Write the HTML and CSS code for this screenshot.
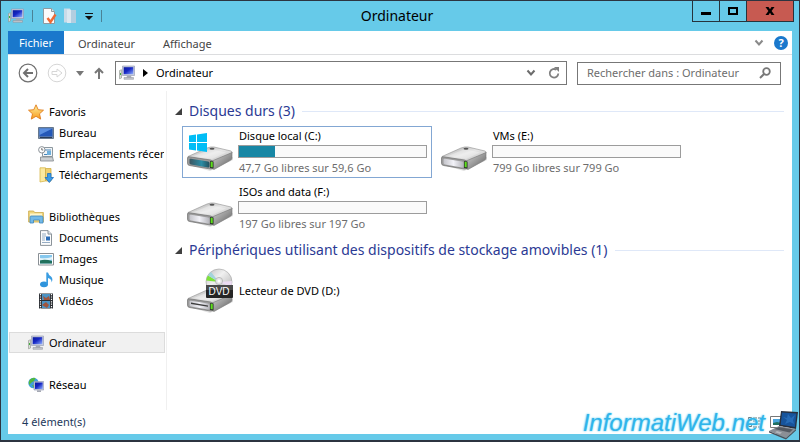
FILE: index.html
```html
<!DOCTYPE html>
<html lang="fr">
<head>
  <meta charset="UTF-8">
  <meta name="viewport" content="width=device-width, initial-scale=1.0">
  <title>Ordinateur</title>
  <link rel="stylesheet" href="styles.css">
</head>
<body>
  <!-- Icônes réutilisées -->
  <svg class="defs" aria-hidden="true">
    <defs>
      <linearGradient id="screen" x1="0" y1="0" x2="1" y2="1">
        <stop offset="0" stop-color="#0a1a9a"/>
        <stop offset="0.45" stop-color="#1626c4"/>
        <stop offset="1" stop-color="#8fb0ff"/>
      </linearGradient>
      <linearGradient id="metalTop" x1="0" y1="0" x2="1" y2="1">
        <stop offset="0" stop-color="#a9a9a9"/>
        <stop offset="0.5" stop-color="#e6e6e6"/>
        <stop offset="1" stop-color="#bdbdbd"/>
      </linearGradient>
      <linearGradient id="metalSide" x1="0" y1="0" x2="1" y2="1">
        <stop offset="0" stop-color="#d8d8d8"/>
        <stop offset="1" stop-color="#5c5c5c"/>
      </linearGradient>
      <linearGradient id="front" x1="0" y1="0" x2="1" y2="0">
        <stop offset="0" stop-color="#c4c4ca"/>
        <stop offset="0.5" stop-color="#f2f2f8"/>
        <stop offset="1" stop-color="#b4b4ba"/>
      </linearGradient>
      <linearGradient id="frontSystem" x1="0" y1="0" x2="1" y2="0">
        <stop offset="0" stop-color="#3b5560"/>
        <stop offset="0.6" stop-color="#2b8ca4"/>
        <stop offset="1" stop-color="#24505e"/>
      </linearGradient>
      <linearGradient id="disc" x1="0" y1="0" x2="1" y2="1">
        <stop offset="0" stop-color="#bcbcbc"/>
        <stop offset="0.4" stop-color="#f0f0f0"/>
        <stop offset="1" stop-color="#a8a8a8"/>
      </linearGradient>
      <linearGradient id="gold" x1="0" y1="0" x2="0" y2="1">
        <stop offset="0" stop-color="#fff2a0"/>
        <stop offset="1" stop-color="#f79a1c"/>
      </linearGradient>
      <symbol id="pc" viewBox="0 0 16 16">
        <path d="M.5 5.500l2-.8V13l-2 .8z" fill="#d9dcd6" stroke="#8c928c" stroke-width=".6"/>
        <path d="M1 8h1v2H1z" fill="#3fae3a"/>
        <path d="M3.500 1h12v9.500h-12z" fill="#c9cede" stroke="#8e96ae" stroke-width=".6"/>
        <path d="M4.700 2.200h9.600v7H4.700z" fill="url(#screen)"/>
        <path d="M8 10.700h4l.6 2H7.400z" fill="#a5a9b4"/>
        <path d="M5 12.500h9.500v1.800H5z" fill="#c3c6cd" stroke="#8a8e98" stroke-width=".5"/>
      </symbol>
      <symbol id="drive" viewBox="0 0 48 26">
        <path d="M3 16l20 7 24-12v3L24 25 3 19z" fill="#000" opacity=".12"/>
        <path d="M2 10.500L21 2Q25 .5 28 1l17 4q2 1 1 2.200L27 15.500 3 12z" fill="url(#metalTop)" stroke="#8f8f8f" stroke-width=".6"/>
        <path d="M8 10L25 3l15 3.500L26 13z" fill="#fff" opacity=".3"/>
        <path d="M26 15L46 6.500V12q0 1.500-2 2.500L28 23.500l-2-1z" fill="url(#metalSide)" stroke="#777" stroke-width=".6"/>
        <path d="M1.500 12q0-1.500 2-1.200l21 3.200q2.500.5 2.500 2.500v4.500q0 2.500-2.500 2L3.500 19.500q-2-.5-2-2z" fill="#9a9a9a" stroke="#707070" stroke-width=".7"/>
        <ellipse cx="26" cy="2.800" rx="2.500" ry="1" fill="#555"/>
      </symbol>
      <symbol id="led" viewBox="0 0 48 26">
        <path d="M24 15l3.500 .5v7l-3.500-.6z" fill="#2f3b2b"/>
        <path d="M24.700 15.800l2 .3v5.200l-2-.3z" fill="#5ee01c"/>
      </symbol>
    </defs>
  </svg>

  <div class="window">
    <header class="titlebar">
      <div class="quick">
        <svg class="icon16" aria-hidden="true"><use href="#pc"/></svg>
        <span class="sep"></span>
        <button class="quick-btn" type="button" aria-label="Propriétés">
          <svg viewBox="0 0 16 16" width="16" height="16">
            <path d="M2.500 .5h8l3 3v12h-11z" fill="#fbfbfb" stroke="#8e9aa0"/>
            <path d="M10.500 .5v3h3" fill="#dfe5e8" stroke="#8e9aa0"/>
            <path d="M6.500 10l3 4 5-7.500" fill="none" stroke="#ef6a34" stroke-width="2.400"/>
          </svg>
        </button>
        <button class="quick-btn" type="button" aria-label="Nouveau dossier">
          <svg viewBox="0 0 16 16" width="16" height="16">
            <path d="M1 .5h6v14H1z" fill="#c9dbe8"/>
            <path d="M6 2h7v13H4z" fill="#b3cee0"/>
            <path d="M4 1.500h4V15H4z" fill="#dbe8f1"/>
          </svg>
        </button>
        <button class="quick-btn" type="button" aria-label="Personnaliser la barre d'outils">
          <svg viewBox="0 0 8 8" width="8" height="8"><path d="M0 1h8v1H0zM0 4h8L4 8z" fill="#111"/></svg>
        </button>
        <span class="sep"></span>
      </div>
      <h1 class="title">Ordinateur</h1>
      <div class="controls">
        <button type="button" aria-label="Réduire"><svg viewBox="0 0 10 10" width="10" height="10"><path d="M0 6h10v3H0z"/></svg></button>
        <button type="button" aria-label="Agrandir"><svg viewBox="0 0 10 10" width="10" height="10"><path d="M0 1h10v8H0zM2 3v4h6V3z" fill-rule="evenodd"/></svg></button>
        <button class="close" type="button" aria-label="Fermer"><svg viewBox="0 0 10 10" width="10" height="10"><path d="M.5 1h3L5 3.300 6.500 1h3L6.600 5l2.900 4h-3L5 6.700 3.500 9h-3l2.900-4z"/></svg></button>
      </div>
    </header>

    <div class="client">
      <nav class="ribbon" aria-label="Ruban">
        <button class="tab tab-file" type="button">Fichier</button>
        <button class="tab" type="button">Ordinateur</button>
        <button class="tab" type="button">Affichage</button>
        <div class="ribbon-end">
          <button class="flat" type="button" aria-label="Développer le ruban">
            <svg viewBox="0 0 10 8" width="10" height="8"><path d="M1.500 1.500L5 5.500l3.500-4" fill="none" stroke="#8a8a8a" stroke-width="2"/></svg>
          </button>
          <button class="help" type="button" aria-label="Aide">?</button>
        </div>
      </nav>

      <div class="toolbar">
        <div class="history">
          <button class="flat" type="button" aria-label="Précédent">
            <svg viewBox="0 0 20 20" width="20" height="20" fill="none" stroke="#707070">
              <circle cx="10" cy="10" r="8.800" stroke-width="1.200"/>
              <path d="M15 10H6.500M10 6l-4 4 4 4" stroke-width="2"/>
            </svg>
          </button>
          <button class="flat" type="button" aria-label="Suivant" disabled>
            <svg viewBox="0 0 20 20" width="20" height="20" fill="none" stroke="#d6d6d6">
              <circle cx="10" cy="10" r="8.800"/>
              <path d="M5 8.500h5V6l5 4-5 4v-2.500H5z"/>
            </svg>
          </button>
          <button class="flat" type="button" aria-label="Emplacements précédents">
            <svg viewBox="0 0 8 5" width="8" height="5"><path d="M0 0h8L4 5z" fill="#777"/></svg>
          </button>
          <button class="flat" type="button" aria-label="Dossier parent">
            <svg viewBox="0 0 12 12" width="12" height="12"><path d="M6 12V2M2 6l4-4 4 4" fill="none" stroke="#777" stroke-width="2"/></svg>
          </button>
        </div>
        <div class="address">
          <svg class="icon16" aria-hidden="true"><use href="#pc"/></svg>
          <svg viewBox="0 0 5 8" width="5" height="8" aria-hidden="true"><path d="M0 0l5 4-5 4z"/></svg>
          <a class="crumb" href="#">Ordinateur</a>
          <button class="flat" type="button" aria-label="Adresses récentes">
            <svg viewBox="0 0 10 8" width="10" height="8"><path d="M1.500 1.500L5 5.500l3.500-4" fill="none" stroke="#6c6c6c" stroke-width="2"/></svg>
          </button>
          <button class="flat" type="button" aria-label="Actualiser">
            <svg viewBox="0 0 12 12" width="12" height="12"><path d="M8.500 2.800A4.300 4.300 0 1 0 10.300 6.500" fill="none" stroke="#808080" stroke-width="1.800"/><path d="M6 0h5v5z" fill="#808080"/></svg>
          </button>
        </div>
        <div class="search">
          <input type="text" aria-label="Rechercher" placeholder="Rechercher dans : Ordinateur">
          <svg viewBox="0 0 12 12" width="12" height="12" aria-hidden="true"><circle cx="7.500" cy="4.500" r="3.300" fill="none" stroke="#777" stroke-width="1.800"/><path d="M5 7l-4 4" stroke="#777" stroke-width="2"/></svg>
        </div>
      </div>

      <div class="body">
        <nav class="sidebar" aria-label="Volet de navigation">
          <ul>
            <li><a href="#">
              <svg class="icon16" viewBox="0 0 16 16"><path d="M8 .8l2.200 4.900 5.300.5-4 3.600 1.200 5.300L8 12.300l-4.700 2.800 1.200-5.300-4-3.600 5.300-.5z" fill="url(#gold)" stroke="#e07c1c" stroke-width=".9"/></svg>
              Favoris</a></li>
            <li class="child"><a href="#">
              <svg class="icon16" viewBox="0 0 16 16"><path d="M.5 2.500h15v11H.5z" fill="#7d8fa8" stroke="#66788e"/><path d="M1.500 3.500h13v8h-13z" fill="#2458b8"/><path d="M1.500 3.500h13L1.500 10z" fill="#5b8fe0"/><path d="M2 12h12v1H2z" fill="#2a3c58"/></svg>
              Bureau</a></li>
            <li class="child"><a href="#">
              <svg class="icon16" viewBox="0 0 16 16"><path d="M4.500 1.500h10v9h-10z" fill="#f2f5f7" stroke="#8d989f"/><path d="M6 4h7M6 8.500h3" stroke="#4a86b8"/><path d="M9 5h4v4H9z" fill="#6fb0dc"/><path d="M2.500 11h12l1 4h-13z" fill="#ccd0d3" stroke="#83898d" stroke-width=".8"/><circle cx="3.800" cy="3.800" r="3.200" fill="#fff" stroke="#8b9298"/><path d="M3.800 2v2h1.500" fill="none" stroke="#555" stroke-width=".8"/></svg>
              Emplacements récents</a></li>
            <li class="child"><a href="#">
              <svg class="icon16" viewBox="0 0 16 16"><path d="M2 .8h5.500V14L2 15z" fill="#fbe9a0" stroke="#d8b84c" stroke-width=".8"/><path d="M7.500 1.500H13V14H7.500z" fill="#f0d070" stroke="#cfae46" stroke-width=".8"/><path d="M9.500 6.500h3.500v4h2.500l-4.200 5-4.300-5h2.500z" fill="#3c9be6" stroke="#1d6fc0" stroke-width=".8"/></svg>
              Téléchargements</a></li>
          </ul>
          <ul>
            <li><a href="#">
              <svg class="icon16" viewBox="0 0 16 16"><path d="M.6 2h5l1 1.500h8.800V13H.6z" fill="#f0d67c" stroke="#cba94c" stroke-width=".8"/><path d="M2 4.500h12v3H2z" fill="#fff5c8"/><path d="M3 7h10.500q1.500 0 1.500 1.500V14h-3.500v-3h-6v3H2V8.500Q2 7 3 7z" fill="#72b9e8" stroke="#3d86bd" stroke-width=".8"/></svg>
              Bibliothèques</a></li>
            <li class="child"><a href="#">
              <svg class="icon16" viewBox="0 0 16 16"><path d="M2.500 .6H10l3.500 3.500v11.300h-11z" fill="#fcfcfc" stroke="#7e878e" stroke-width=".9"/><path d="M10 .6v3.500h3.500" fill="#dde3e8" stroke="#7e878e" stroke-width=".9"/><path d="M4 4h4M4 6h4M4 8h3M4 10h3M4 12.500h8" stroke="#8ba4bd" stroke-width=".9"/><path d="M8 6.500h4v4H8z" fill="#2d6eb8"/></svg>
              Documents</a></li>
            <li class="child"><a href="#">
              <svg class="icon16" viewBox="0 0 16 16"><path d="M.5 2.500h15v11.500H.5z" fill="#fff" stroke="#8a9095"/><path d="M2 4h12v8.500H2z" fill="#86c8ee"/><path d="M2 7q6 1 12-1v2.500q-6 2-12 1z" fill="#e4f4fa"/><path d="M2 9.500q5-1.500 12 .5v2.500H2z" fill="#20705c"/></svg>
              Images</a></li>
            <li class="child"><a href="#">
              <svg class="icon16" viewBox="0 0 16 16"><ellipse cx="6" cy="12.300" rx="4" ry="2.900" fill="#2f94dc"/><path d="M8.300 .5H10q.5 2.500 3 4 2.500 2.500.5 6 .5-3.500-3.500-4.500v6.300H8.300z" fill="#3b9de2"/></svg>
              Musique</a></li>
            <li class="child"><a href="#">
              <svg class="icon16" viewBox="0 0 16 16"><path d="M1 .5h14v15H1z" fill="#2b2e33"/><path d="M4 1h8v6H4zM4 8h8v7H4z" fill="#4b93c4"/><path d="M5 3l3 2 3-2 1 4H6zM4 12l4-3 3 3-2 3z" fill="#a0553c"/><path d="M2.500 1v15M13.500 1v15" stroke="#fff" stroke-width="1.200" stroke-dasharray="1.200 1.200"/></svg>
              Vidéos</a></li>
          </ul>
          <ul>
            <li class="selected"><a href="#" aria-current="page">
              <svg class="icon16"><use href="#pc"/></svg>
              Ordinateur</a></li>
          </ul>
          <ul>
            <li><a href="#">
              <svg class="icon16" viewBox="0 0 16 16"><circle cx="5.500" cy="6" r="5.200" fill="#3fa0dc"/><path d="M2 2.500q3-2.500 5.500-1.500L6 4 3.500 5.500 1 8Q0 5 2 2.500zM4 8l3 .5-1 2.500z" fill="#52b83c"/><path d="M6 4.500h9.700v8.500H6z" fill="#c9cede" stroke="#8e96ae" stroke-width=".6"/><path d="M7 5.500h7.700V12H7z" fill="url(#screen)"/><path d="M9 13.300h4v1.700H9z" fill="#a5a9b4"/></svg>
              Réseau</a></li>
          </ul>
        </nav>

        <main class="content">
          <section class="group">
            <h2 class="group-title"><svg viewBox="0 0 7 7" width="7" height="7" aria-hidden="true"><path d="M7 0v7H0z" fill="#404040"/></svg>Disques durs (3)</h2>
            <div class="tiles">
              <div class="tile tile-selected">
                <svg class="tile-icon" viewBox="0 0 48 48" aria-hidden="true">
                  <use href="#drive" x="0" y="18" width="48" height="26"/>
                  <path d="M3.500 31.500q0-1 1.500-.7l17 2.800q1.500.3 1.500 1.700v3q0 1.500-1.500 1.200L5 36.500q-1.500-.3-1.500-1.500z" fill="url(#frontSystem)"/>
                  <use href="#led" x="0" y="18" width="48" height="26"/>
                  <path d="M3 7.500l7-1V14H3zM11 6.400L21 5v9H11zM3 15h7v7.500l-7-1zM11 15h10v9l-10-1.400z" fill="#00bdf6"/>
                </svg>
                <div class="tile-info">
                  <label class="name" for="disk-c">Disque local (C:)</label>
                  <progress class="usage" id="disk-c" max="100" value="19"></progress>
                  <span class="free">47,7 Go libres sur 59,6 Go</span>
                </div>
              </div>
              <div class="tile">
                <svg class="tile-icon" viewBox="0 0 48 48" aria-hidden="true">
                  <use href="#drive" x="0" y="18" width="48" height="26"/>
                  <path d="M3.500 31.500q0-1 1.500-.7l17 2.800q1.500.3 1.500 1.700v3q0 1.500-1.500 1.200L5 36.500q-1.500-.3-1.500-1.500z" fill="url(#front)"/>
                  <use href="#led" x="0" y="18" width="48" height="26"/>
                </svg>
                <div class="tile-info">
                  <label class="name" for="disk-e">VMs (E:)</label>
                  <progress class="usage" id="disk-e" max="100" value="0"></progress>
                  <span class="free">799 Go libres sur 799 Go</span>
                </div>
              </div>
              <div class="tile">
                <svg class="tile-icon" viewBox="0 0 48 48" aria-hidden="true">
                  <use href="#drive" x="0" y="18" width="48" height="26"/>
                  <path d="M3.500 31.500q0-1 1.500-.7l17 2.800q1.500.3 1.500 1.700v3q0 1.500-1.500 1.200L5 36.500q-1.500-.3-1.500-1.500z" fill="url(#front)"/>
                  <use href="#led" x="0" y="18" width="48" height="26"/>
                </svg>
                <div class="tile-info">
                  <label class="name" for="disk-f">ISOs and data (F:)</label>
                  <progress class="usage" id="disk-f" max="100" value="0"></progress>
                  <span class="free">197 Go libres sur 197 Go</span>
                </div>
              </div>
            </div>
          </section>

          <section class="group">
            <h2 class="group-title"><svg viewBox="0 0 7 7" width="7" height="7" aria-hidden="true"><path d="M7 0v7H0z" fill="#404040"/></svg>Périphériques utilisant des dispositifs de stockage amovibles (1)</h2>
            <div class="tiles">
              <div class="tile">
                <svg class="tile-icon" viewBox="0 0 48 48" aria-hidden="true">
                  <use href="#drive" x="0" y="21" width="48" height="26"/>
                  <path d="M3.500 34.500q0-1 1.500-.7l17 2.800q1.500.3 1.500 1.700v3q0 1.500-1.500 1.200L5 39.500q-1.500-.3-1.500-1.500z" fill="url(#front)"/>
                  <path d="M5 35.500l17 2.900v1.300L5 36.900z" fill="#3d3d3d"/>
                  <use href="#led" x="0" y="21" width="48" height="26"/>
                  <circle cx="33" cy="15" r="13" fill="url(#disc)" stroke="#a0a0a0" stroke-width=".6"/>
                  <path d="M33 15L22 8.500q-1.500 2.500-1.800 5z" fill="#7ee33a"/>
                  <path d="M33 15L25 5q-2 1.500-3 3.500z" fill="#a4d4dc"/>
                  <path d="M33 15l12 5q1.200-3 .8-6z" fill="#ecdcf2"/>
                  <circle cx="33" cy="14" r="3.600" fill="#e4e4e4" stroke="#aaa" stroke-width=".7"/>
                  <circle cx="33" cy="14" r="1.500" fill="#fff"/>
                  <path d="M20 18h27v12q0 1-1 1H21q-1 0-1-1z" fill="#252525"/>
                  <path d="M20 18h27v5H20z" fill="#4a4a4a"/>
                  <text class="dvd" x="33" y="28" text-anchor="middle">DVD</text>
                </svg>
                <div class="tile-info">
                  <span class="name">Lecteur de DVD (D:)</span>
                </div>
              </div>
            </div>
          </section>
        </main>
      </div>

      <footer class="status">
        <span class="count">4 élément(s)</span>
        <div class="views">
          <button class="flat" type="button" aria-label="Détails">
            <svg viewBox="0 0 14 12" width="14" height="12"><path d="M.5 1.500h3v3h-3zM.5 7.500h3v3h-3z" fill="#fff" stroke="#666"/><path d="M5 2h4M10 2h4M5 5h4M10 5h4M5 8h4M10 8h4M5 11h4M10 11h4" stroke="#666"/></svg>
          </button>
          <button class="flat" type="button" aria-label="Grandes icônes">
            <svg viewBox="0 0 14 12" width="14" height="12"><path d="M.5 .5h13v11H.5z" fill="#fff" stroke="#777"/><path d="M3 3h8v6H3z" fill="#4aa5dc"/><path d="M3 7l4-1 4 1v2H3z" fill="#217060"/></svg>
          </button>
        </div>
      </footer>
    </div>

    <div class="brand">
      <span class="brand-name">InformatiWeb.net</span>
      <svg viewBox="0 0 30 30" width="30" height="30" aria-hidden="true">
        <path d="M12 1l17 1-2 17-17-3z" fill="#28303e"/>
        <path d="M13 2.500l14.500.9-1.600 13.600-14.200-2.300z" fill="#17549c"/>
        <path d="M19 4l3 4 4-3-2 5 1 4-4-2-5 2 2-4-4-3 4 1z" fill="#3f8fe0" opacity=".4"/>
        <path d="M10 16l17 3-10 9-17-7z" fill="#8b8f96"/>
        <path d="M10 17l14 2.600-3.500 3L5.500 19z" fill="#555a62"/>
        <path d="M8 21l5 1.500-2 1.500-5-1.800z" fill="#b4b8be"/>
        <path d="M0 21l17 7 10-9v1.500l-10 9L0 22.500z" fill="#4c5058"/>
      </svg>
    </div>
  </div>
</body>
</html>
```
FILE: styles.css
```css
* {
  box-sizing: border-box;
}
body {
  margin: 0;
  font-family: "Noto Sans", "Open Sans", sans-serif;
  font-size: 11px;
  line-height: 16px;
  color: #000;
}
button {
  font: inherit;
  color: inherit;
  border: none;
  background: none;
  padding: 0;
}
svg {
  display: block;
  flex: none;
}
a {
  color: inherit;
  text-decoration: none;
}
.defs {
  position: absolute;
  width: 0;
  height: 0;
}
.icon16 {
  width: 16px;
  height: 16px;
}
.flat {
  display: flex;
  align-items: center;
}

/* Fenêtre */
.window {
  position: relative;
  display: flex;
  flex-direction: column;
  min-height: 100vh;
  padding: 0 7px 6px;
  background: #66cae9;
  border: 1px solid #2c3440;
  border-bottom-width: 2px;
}
.titlebar {
  display: grid;
  grid-template-columns: 1fr auto 1fr;
  height: 30px;
  margin-right: -2px;
}
.quick {
  display: flex;
  align-items: center;
  gap: 8px;
}
.quick-btn {
  display: flex;
}
.quick-btn + .quick-btn {
  margin-left: -2px;
}
.sep {
  width: 1px;
  height: 12px;
  background: #4a8296;
}
.title {
  margin: 0;
  padding-right: 8px;
  font-size: 14px;
  font-weight: normal;
  line-height: 30px;
}
.controls {
  display: flex;
  justify-self: end;
  height: 21px;
  border: 1px solid #26333c;
  border-top: none;
}
.controls button {
  display: flex;
  align-items: center;
  justify-content: center;
  width: 27px;
  border-right: 1px solid #26333c;
}
.controls .close {
  width: 46px;
  border-right: none;
  background: #c75a51;
}

/* Ruban */
.client {
  display: flex;
  flex-direction: column;
  flex: 1;
  background: #fff;
}
.ribbon {
  display: flex;
  height: 24px;
  border-bottom: 1px solid #dcdddf;
}
.tab {
  padding: 2px 14px 0;
  color: #444;
}
.tab-file {
  width: 56px;
  padding: 0;
  background: #1a78cc;
  color: #fff;
}
.ribbon-end {
  display: flex;
  align-items: center;
  gap: 10px;
  margin-left: auto;
  padding-right: 4px;
}
.help {
  width: 14px;
  height: 14px;
  border-radius: 50%;
  background: #1a78cc;
  color: #fff;
  font-weight: bold;
  line-height: 14px;
}

/* Barre d'adresse */
.toolbar {
  display: flex;
  align-items: center;
  gap: 10px;
  height: 36px;
  padding: 0 11px 0 10px;
}
.history {
  display: flex;
  align-items: center;
  gap: 9px;
  width: 88px;
}
.address {
  display: flex;
  align-items: center;
  gap: 8px;
  flex: 1;
  height: 24px;
  margin-left: -1px;
  padding: 0 6px 0 3px;
  border: 1px solid #777;
}
.crumb {
  flex: 1;
}
.address .flat:last-child {
  margin-left: 4px;
}
.search {
  display: flex;
  align-items: center;
  width: 204px;
  height: 23px;
  padding: 0 9px;
  border: 1px solid #777;
}
.search input {
  flex: 1;
  min-width: 0;
  padding: 0;
  border: none;
  outline: none;
  background: none;
  font: inherit;
}
.search input::placeholder {
  color: #6d6d6d;
  opacity: 1;
}

/* Volet de navigation */
.body {
  display: flex;
  flex: 1;
}
.sidebar {
  width: 159px;
  padding: 10px 1px 0;
  border-right: 1px solid #f0f0f0;
}
.sidebar ul {
  margin: 0;
  padding: 0;
  list-style: none;
}
.sidebar ul + ul {
  margin-top: 21px;
}
.sidebar a {
  display: flex;
  align-items: center;
  gap: 5px;
  height: 21px;
  padding-left: 18px;
  border: 1px solid transparent;
  white-space: nowrap;
  overflow: hidden;
}
.sidebar .child a {
  padding-left: 28px;
}
.sidebar .selected a {
  background: #f1f1f1;
  border-color: #dcdcdc;
}

/* Contenu */
.content {
  flex: 1;
  padding: 8px 8px 0;
}
.group {
  margin-bottom: 4px;
}
.group-title {
  display: flex;
  align-items: center;
  gap: 7px;
  margin: 0 0 3px;
  font-size: 14px;
  font-weight: normal;
  line-height: 24px;
  color: #2b3a94;
}
.group-title::after {
  content: "";
  flex: 1;
  height: 1px;
  background: #dfe8f8;
}
.tiles {
  display: flex;
  flex-wrap: wrap;
  gap: 4px;
  padding-left: 7px;
}
.tile {
  display: flex;
  align-items: center;
  gap: 4px;
  width: 250px;
  height: 52px;
  padding: 0 4px 0 3px;
  border: 1px solid transparent;
}
.tile-selected {
  border-color: #83a7d3;
}
.tile-icon {
  width: 48px;
  height: 48px;
}
.tile-info {
  display: flex;
  flex-direction: column;
  flex: 1;
}
.name,
.free {
  padding-left: 1px;
}
.free {
  color: #6d6d6d;
}
.usage {
  appearance: none;
  width: 100%;
  height: 13px;
  margin: 1px 0 2px;
  border: 1px solid #9c9c9c;
  background: #fafafa;
}
.usage::-webkit-progress-bar {
  background: #fafafa;
}
.usage::-webkit-progress-value {
  background: #1887a5;
}
.dvd {
  font-family: "Liberation Sans", Arial, sans-serif;
  font-size: 10px;
  fill: #fff;
}

/* Barre d'état */
.status {
  display: flex;
  align-items: center;
  justify-content: space-between;
  height: 24px;
  padding: 0 8px 0 14px;
  color: #1e395b;
}
.views {
  display: flex;
  gap: 8px;
}

/* Logo posé sur le coin de la fenêtre */
.brand {
  position: absolute;
  right: 0;
  bottom: -1px;
  display: flex;
  align-items: center;
  gap: 4px;
}
.brand-name {
  padding-bottom: 4px;
  font-family: "Liberation Sans", Arial, sans-serif;
  font-size: 24px;
  font-style: italic;
  line-height: 28px;
  color: #2fb4ea;
  text-shadow: 0 0 2px #8adcf6, 0 0 2px #8adcf6;
}
```
